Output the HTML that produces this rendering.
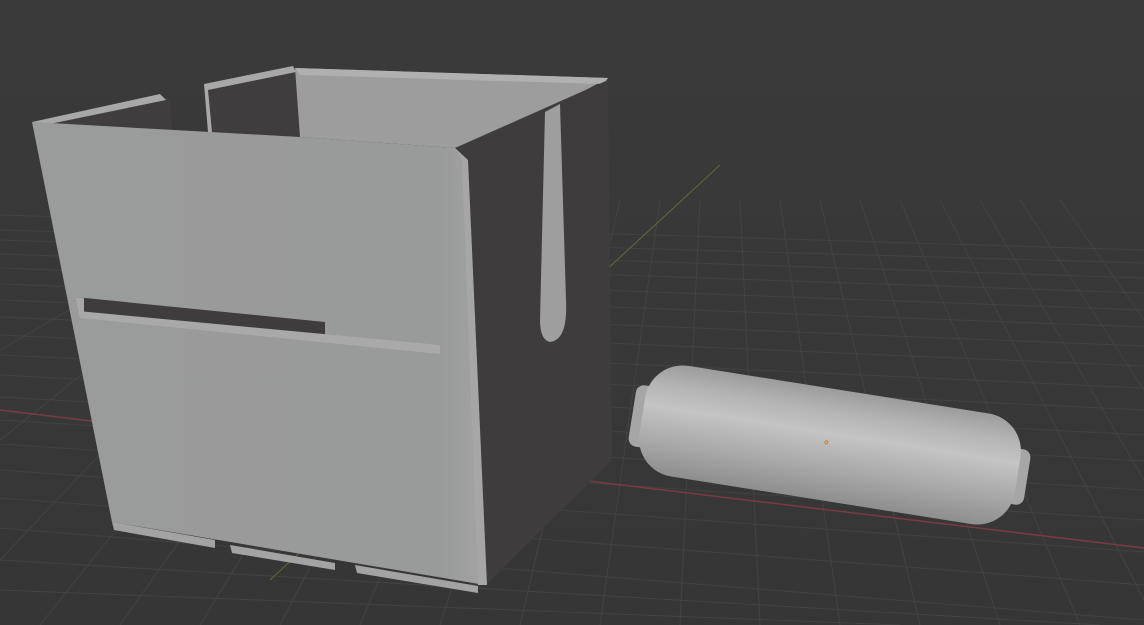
<!DOCTYPE html>
<html><head><meta charset="utf-8"><style>
html,body{margin:0;padding:0;background:#393939;width:1144px;height:625px;overflow:hidden}
svg{display:block}
</style></head><body>
<svg width="1144" height="625" viewBox="0 0 1144 625" xmlns="http://www.w3.org/2000/svg">
<defs>
<linearGradient id="bg" x1="0" y1="0" x2="0" y2="1">
<stop offset="0" stop-color="#3a3a3a"/><stop offset="1" stop-color="#363636"/>
</linearGradient>
<linearGradient id="cyl" x1="0" y1="0" x2="0" y2="1">
<stop offset="0" stop-color="#9c9c9c"/><stop offset="0.2" stop-color="#b4b4b4"/>
<stop offset="0.4" stop-color="#c4c4c4"/><stop offset="0.7" stop-color="#aaaaaa"/>
<stop offset="1" stop-color="#8e8e8e"/>
</linearGradient>
<linearGradient id="front" x1="0" y1="0" x2="1" y2="0">
<stop offset="0" stop-color="#9a9b9b"/><stop offset="0.9" stop-color="#999a9a"/><stop offset="1" stop-color="#a3a3a3"/>
</linearGradient>
</defs>
<rect width="1144" height="625" fill="url(#bg)"/>
<g stroke="#444" stroke-width="1" fill="none" opacity="0.9">
<!-- horizontal-ish grid lines -->
<path d="M0 215 L1144 250 M0 240 L1144 278 M0 268 L1144 310 M0 300 L1144 346 M0 335 L1144 388 M0 375 L1144 435 M0 420 L1144 490 M0 470 L1144 552 M0 528 L1144 620 M0 590 L900 625"/>
<path d="M0 230 L1144 263 M0 254 L1144 293 M0 284 L1144 327 M0 317 L1144 366 M0 355 L1144 410 M0 397 L1144 461 M0 444 L1144 520 M0 498 L1144 585 M0 560 L1100 625"/>
<!-- converging lines -->
<path d="M40 625 L380 200 M120 625 L420 200 M200 625 L460 200 M280 625 L500 200 M360 625 L540 200 M440 625 L580 200 M520 625 L620 200 M600 625 L660 200 M680 625 L700 200 M760 625 L740 200 M840 625 L780 200 M920 625 L820 200 M1000 625 L860 200 M1080 625 L900 200 M1144 600 L940 200 M1144 480 L980 200 M1144 390 L1020 200 M1144 320 L1060 200 M0 560 L340 200 M0 440 L300 200 M0 350 L260 200"/>
</g>
<path d="M0 410 L1144 548" stroke="#7a3a45" stroke-width="1.5"/>
<path d="M270 580 L720 165" stroke="#5d6a3a" stroke-width="1"/>

<!-- box: dark interiors -->
<polygon points="32,122 160,96 170,100 172,130 210,133 205,85 295,68 300,137" fill="#403d3e"/>
<!-- back wall interior light -->
<polygon points="295,68 608,78 560,104 455,148 300,137" fill="#9d9d9d"/>
<polygon points="295,68 608,78 604,84 300,75" fill="#b0b0b0"/>
<!-- left wall top strip -->
<polygon points="32,122 160,94 166,100 40,126" fill="#a8a8a8"/>
<polygon points="204,84 293,66 296,72 208,90 212,132 208,132" fill="#a8a8a8"/>
<!-- right dark side -->
<polygon points="455,148 608,80 612,460 486,585 470,585" fill="#3f3c3d"/>
<!-- right U slot light -->
<path d="M545 112 L560 104 L566 300 Q568 340 550 342 Q540 340 540 320 Z" fill="#9e9e9e"/>
<!-- front face -->
<polygon points="32,122 300,137 455,148 466,160 485,585 112,522" fill="url(#front)"/>
<polygon points="455,148 468,160 487,585 478,585 462,160" fill="#a6a6a6"/>
<!-- front slot -->
<polygon points="75,297 325,322 325,337 78,312" fill="#3f3c3d"/>
<polygon points="75,297 84,298 84,312 78,312" fill="#a8a8a8"/>
<polygon points="78,311 440,345 440,354 80,318" fill="#a9a9a9"/>
<!-- feet -->
<polygon points="112,522 215,540 215,548 114,530" fill="#a3a3a3"/>
<polygon points="230,545 335,563 335,570 232,553" fill="#a3a3a3"/>
<polygon points="355,565 478,586 478,593 357,573" fill="#a3a3a3"/>

<!-- cylinder -->
<g transform="translate(830,445) rotate(9)">
<rect x="-200" y="-30" width="20" height="62" rx="8" fill="#a6a6a6"/>
<rect x="182" y="-26" width="18" height="56" rx="8" fill="#a6a6a6"/>
<rect x="-190" y="-56" width="380" height="112" rx="38" fill="url(#cyl)"/>
<circle cx="-4" cy="-2" r="1.5" fill="none" stroke="#d08020"/>
</g>
</svg>
</body></html>
